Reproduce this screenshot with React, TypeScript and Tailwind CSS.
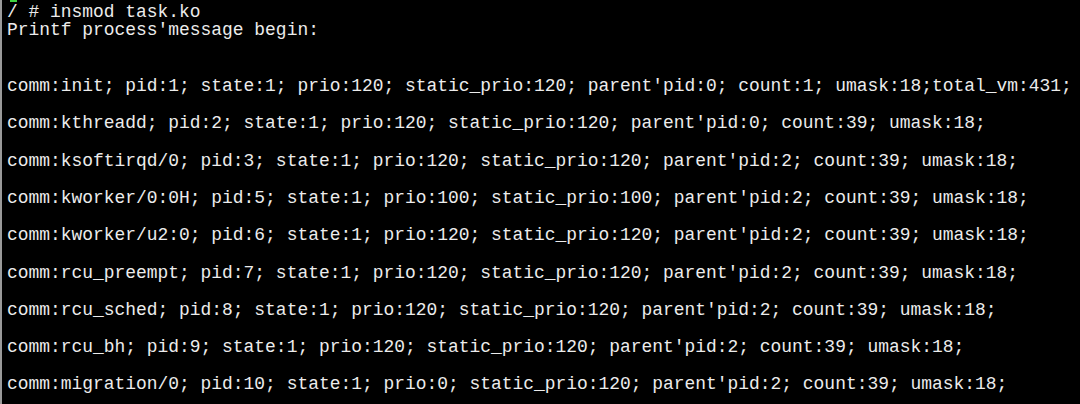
const lines: string[] = [
  "/ # insmod task.ko",
  "Printf process'message begin:",
  "",
  "",
  "comm:init; pid:1; state:1; prio:120; static_prio:120; parent'pid:0; count:1; umask:18;total_vm:431;",
  "",
  "comm:kthreadd; pid:2; state:1; prio:120; static_prio:120; parent'pid:0; count:39; umask:18;",
  "",
  "comm:ksoftirqd/0; pid:3; state:1; prio:120; static_prio:120; parent'pid:2; count:39; umask:18;",
  "",
  "comm:kworker/0:0H; pid:5; state:1; prio:100; static_prio:100; parent'pid:2; count:39; umask:18;",
  "",
  "comm:kworker/u2:0; pid:6; state:1; prio:120; static_prio:120; parent'pid:2; count:39; umask:18;",
  "",
  "comm:rcu_preempt; pid:7; state:1; prio:120; static_prio:120; parent'pid:2; count:39; umask:18;",
  "",
  "comm:rcu_sched; pid:8; state:1; prio:120; static_prio:120; parent'pid:2; count:39; umask:18;",
  "",
  "comm:rcu_bh; pid:9; state:1; prio:120; static_prio:120; parent'pid:2; count:39; umask:18;",
  "",
  "comm:migration/0; pid:10; state:1; prio:0; static_prio:120; parent'pid:2; count:39; umask:18;",
];

export default function App() {
  return (
    <div className="w-[1080px] h-[404px] bg-black flex overflow-hidden">
      <div className="w-[2px] h-full bg-[#9a9a9a] shrink-0" />
      <div className="relative flex-1 pl-[5px] pt-[2.6px] text-[#ececec] font-['Liberation_Mono',monospace] text-[17.93px] leading-[18.65px]">
        <span className="absolute left-[8px] top-0 w-[7px] h-[2px] bg-[#3fd23f]" />
        {lines.map((l, i) => (
          <div key={i} className="whitespace-pre h-[18.65px]">
            {l}
          </div>
        ))}
      </div>
    </div>
  );
}
